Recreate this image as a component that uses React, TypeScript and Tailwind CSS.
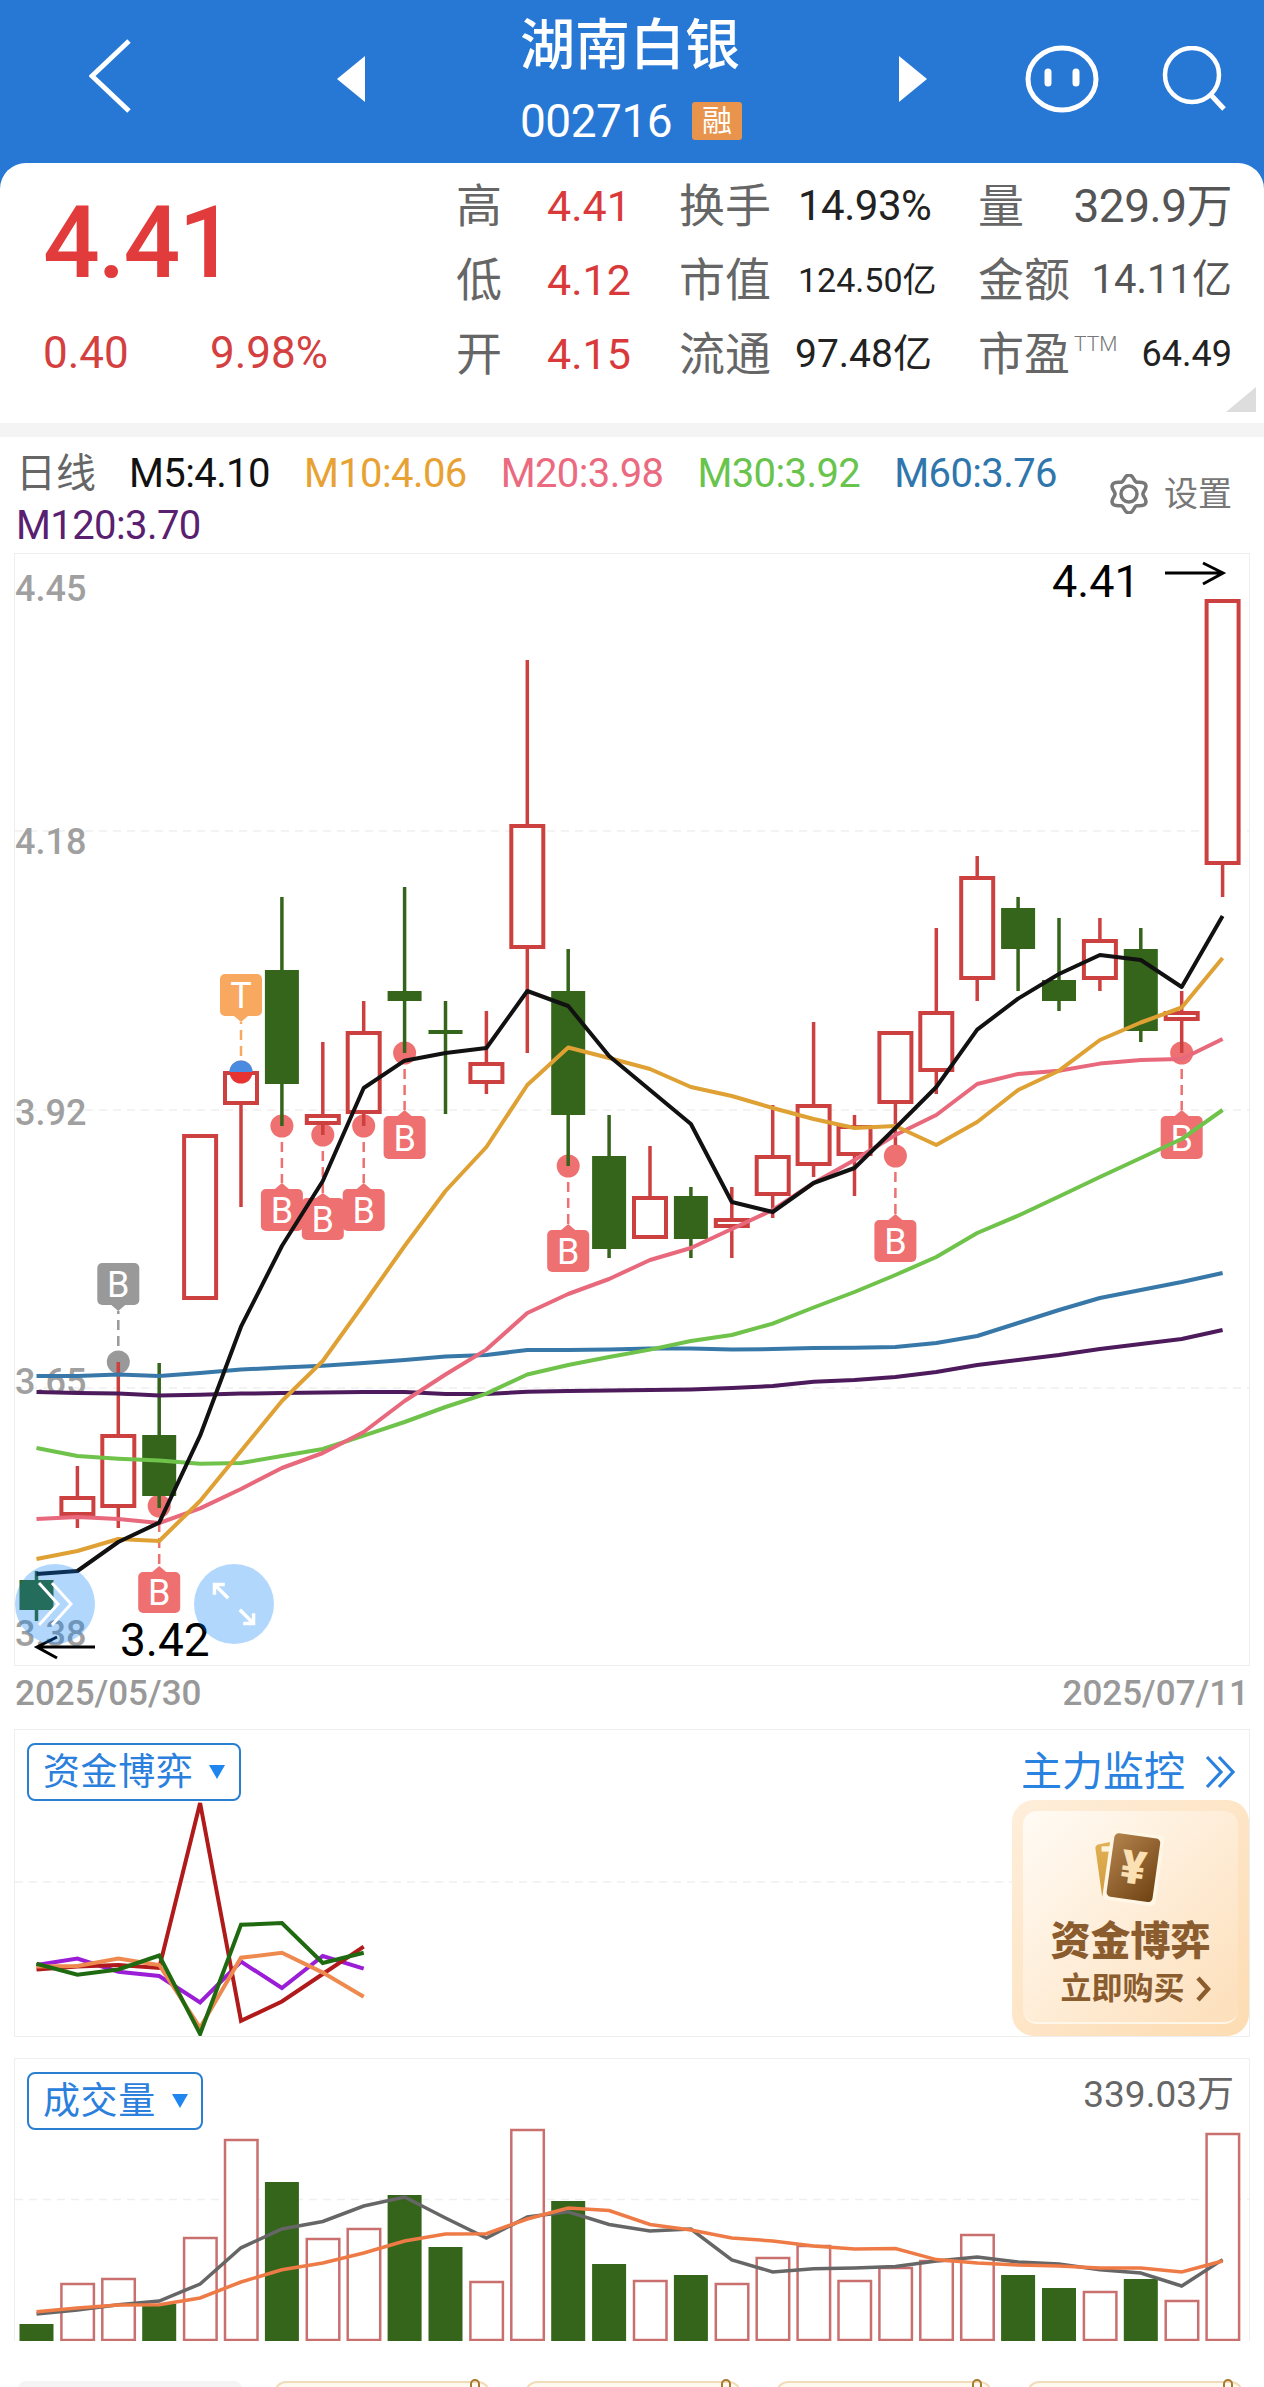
const FONT = "font-['Roboto','Noto_Sans_CJK_SC',sans-serif]";
const RED = "#cc4040";
const GREEN = "#34651a";

const xAt = (i: number) => 36.5 + 40.9 * i;
const pts = (ys: number[]) => ys.map((y, i) => `${xAt(i).toFixed(1)},${y}`).join(" ");

type Candle = [up: boolean, high: number, top: number, bottom: number, low: number];

const candles: Candle[] = [
  [false, 1571, 1580, 1610, 1621],
  [true, 1466, 1496, 1516, 1528],
  [true, 1362, 1434, 1508, 1528],
  [false, 1363, 1435, 1496, 1508],
  [true, 1134, 1134, 1300, 1300],
  [true, 1062, 1071, 1105, 1207],
  [false, 897, 970, 1084, 1126],
  [true, 1042, 1114, 1125, 1135],
  [true, 1001, 1031, 1114, 1126],
  [false, 887, 991, 1001, 1053],
  [false, 1001, 1030, 1034, 1114],
  [true, 1011, 1062, 1084, 1094],
  [true, 660, 824, 949, 1053],
  [false, 949, 991, 1115, 1166],
  [false, 1115, 1156, 1249, 1258],
  [true, 1146, 1196, 1239, 1239],
  [false, 1187, 1196, 1239, 1258],
  [true, 1187, 1218, 1228, 1258],
  [true, 1105, 1155, 1196, 1218],
  [true, 1022, 1104, 1166, 1177],
  [true, 1115, 1125, 1156, 1196],
  [true, 1031, 1031, 1104, 1145],
  [true, 928, 1011, 1072, 1094],
  [true, 856, 876, 980, 1001],
  [false, 897, 908, 949, 991],
  [false, 918, 980, 1001, 1011],
  [true, 918, 939, 980, 991],
  [false, 928, 949, 1031, 1042],
  [true, 991, 1011, 1021, 1053],
  [true, 599, 599, 865, 897],
];

const maLines: { color: string; width: number; ys: number[] }[] = [
  { color: "#3878a8", width: 4, ys: [1376, 1376, 1374.5, 1376, 1373, 1369.5, 1367.6, 1365.7, 1363, 1360, 1356.5, 1355, 1350, 1350, 1349.6, 1348.5, 1348.5, 1349.6, 1349, 1348, 1347.7, 1347, 1343, 1336, 1323, 1310, 1298, 1290, 1282, 1273] },
  { color: "#4d1a5c", width: 4, ys: [1392, 1393, 1393.6, 1395.5, 1394.8, 1393.6, 1393, 1392.5, 1392, 1392, 1394, 1394, 1391.7, 1391, 1390.6, 1390, 1389.4, 1388, 1386, 1381.8, 1380, 1377, 1372, 1365, 1360, 1355, 1349, 1344, 1339, 1330] },
  { color: "#6fc24a", width: 4, ys: [1448, 1456, 1458.7, 1460.6, 1463.7, 1463, 1456, 1449, 1435.7, 1422, 1407, 1393.6, 1374.5, 1365, 1357, 1349.6, 1341, 1335, 1323.6, 1307.5, 1292, 1275, 1257, 1233, 1215.7, 1196.5, 1177, 1158, 1139, 1110] },
  { color: "#e8687c", width: 4, ys: [1519, 1517, 1519, 1523, 1508.4, 1489, 1468, 1453, 1432, 1401, 1374.5, 1349.6, 1313, 1294, 1279, 1260, 1248, 1229, 1210, 1183, 1160, 1135, 1115, 1084, 1074, 1070.7, 1063.6, 1060, 1059, 1039] },
  { color: "#dfa034", width: 4, ys: [1559, 1551, 1539, 1541, 1501, 1451, 1401, 1361, 1304, 1246, 1191, 1147, 1085, 1047.5, 1058, 1069, 1087, 1096, 1108, 1119, 1128, 1126, 1145, 1122, 1090, 1070.7, 1040, 1022.5, 1007.5, 958] },
  { color: "#111111", width: 4, ys: [1574, 1571, 1542, 1522.6, 1435.7, 1326.7, 1246, 1181, 1088, 1060.7, 1053, 1048, 991, 1006, 1056, 1090, 1124, 1202, 1212, 1183, 1168, 1128, 1087, 1029.6, 998.6, 974, 955, 960, 987, 916] },
];

const markers = [
  { i: 2, cy: 1362, top: 1263, bottom: 1305, tip: 1311, color: "#999999" },
  { i: 3, cy: 1506, top: 1572, bottom: 1613, tip: 1566, color: "#ee7070" },
  { i: 7, cy: 1135, top: 1198, bottom: 1240, tip: 1193, color: "#ee7070" },
  { i: 6, cy: 1126, top: 1189, bottom: 1231, tip: 1183, color: "#ee7070" },
  { i: 8, cy: 1126, top: 1189, bottom: 1231, tip: 1183, color: "#ee7070" },
  { i: 9, cy: 1053, top: 1116, bottom: 1159, tip: 1110, color: "#ee7070" },
  { i: 13, cy: 1166, top: 1230, bottom: 1272, tip: 1224, color: "#ee7070" },
  { i: 21, cy: 1156, top: 1220, bottom: 1262, tip: 1214, color: "#ee7070" },
  { i: 28, cy: 1053, top: 1116, bottom: 1159, tip: 1110, color: "#ee7070" },
  { i: 5, cy: 1072, top: 974, bottom: 1016, tip: 1022, color: "#f9a85f", label: "T" },
];

const fundLines: { color: string; ys: number[] }[] = [
  { color: "#9b1dd6", ys: [1965, 1958.5, 1971.7, 1976, 2002.4, 1961.6, 1988, 1956, 1968.6] },
  { color: "#b01a1a", ys: [1969.5, 1966.4, 1965, 1968, 1803, 2020.8, 2001.5, 1974, 1946.7] },
  { color: "#ee8a4f", ys: [1966.4, 1966, 1958.5, 1965, 2027.8, 1957.7, 1952.8, 1972.6, 1996.7] },
  { color: "#1f6a10", ys: [1963.8, 1974.8, 1969.5, 1955.5, 2034, 1924.8, 1923, 1963, 1952.8] },
];

const volumes: [boolean, number][] = [
  [false, 2324], [true, 2284], [true, 2279], [false, 2304], [true, 2238], [true, 2140],
  [false, 2182], [true, 2239], [true, 2229], [false, 2195], [false, 2247], [true, 2282],
  [true, 2130], [false, 2201], [false, 2264], [true, 2281], [false, 2275], [true, 2284],
  [true, 2258], [true, 2246], [true, 2281], [true, 2268], [true, 2261], [true, 2235],
  [false, 2275], [false, 2288], [true, 2292], [false, 2279], [true, 2301], [true, 2134],
];

const volGrey = [2314, 2310, 2304.7, 2301, 2284, 2247.8, 2229, 2221.5, 2206, 2197, 2218, 2238, 2217, 2211.8, 2224.5, 2231, 2229, 2260, 2271.9, 2268.8, 2268, 2266.6, 2261, 2257, 2262, 2264, 2269.7, 2273, 2286, 2259.6];
const volOrange = [2311.7, 2308, 2305, 2304.7, 2298, 2282, 2269.7, 2263, 2253, 2241, 2234, 2233.7, 2219, 2208, 2210.5, 2224.5, 2230, 2238, 2241, 2246, 2249, 2248.6, 2259.6, 2263, 2265, 2266, 2268, 2268, 2272, 2261];

const legend = [
  { text: "M5:4.10", cls: "text-[#111111]" },
  { text: "M10:4.06", cls: "text-[#e8a233]" },
  { text: "M20:3.98", cls: "text-[#ec6a7f]" },
  { text: "M30:3.92", cls: "text-[#68c44c]" },
  { text: "M60:3.76", cls: "text-[#2f76ad]" },
];

const axisLabels = [
  { text: "4.45", y: 601 },
  { text: "4.18", y: 854 },
  { text: "3.92", y: 1125 },
  { text: "3.65", y: 1394 },
  { text: "3.38", y: 1646 },
];

// wavy six lobed gear outline
const gearPath = () => {
  const out: string[] = [];
  for (let a = 0; a < 360; a += 6) {
    const t = (a * Math.PI) / 180;
    const r = 16.5 + 2.6 * Math.cos(6 * t);
    out.push(`${(20 + r * Math.sin(t)).toFixed(2)},${(20 - r * Math.cos(t)).toFixed(2)}`);
  }
  return out.join(" ");
};

const CandleChart = () => (
  <svg viewBox="15 554 1234 1111" className="block h-[1111px] w-[1234px]">
    {[831, 1110, 1388].map((y) => (
      <line key={y} x1={15} x2={1249} y1={y} y2={y} stroke="#f0f0f0" strokeWidth={1.5} strokeDasharray="8 6" />
    ))}
    {axisLabels.map((l) => (
      <text key={l.text} x={15} y={l.y} fontSize={36} fontWeight={500} fill="#a0a0a0" fontFamily="Roboto, sans-serif">
        {l.text}
      </text>
    ))}
    {markers.map((m) => {
      const x = xAt(m.i);
      const isAbove = m.tip > m.bottom;
      return (
        <g key={m.i}>
          <line
            x1={x}
            x2={x}
            y1={m.cy}
            y2={m.tip}
            stroke={m.color}
            strokeWidth={2.5}
            strokeDasharray="10 6"
          />
          <circle cx={x} cy={m.cy} r={11.5} fill={m.color} />
          <rect x={x - 21} y={m.top} width={42} height={m.bottom - m.top} rx={5} fill={m.color} />
          <polygon
            points={
              isAbove
                ? `${x - 7},${m.bottom} ${x + 7},${m.bottom} ${x},${m.tip}`
                : `${x - 7},${m.top} ${x + 7},${m.top} ${x},${m.tip}`
            }
            fill={m.color}
          />
          <text
            x={x}
            y={m.bottom - 8}
            textAnchor="middle"
            fontSize={36}
            fill="#ffffff"
            fontFamily="Roboto, sans-serif"
          >
            {m.label ?? "B"}
          </text>
        </g>
      );
    })}
    {candles.map(([up, high, top, bottom, low], i) => {
      const x = xAt(i);
      const color = up ? RED : GREEN;
      return (
        <g key={i}>
          {high < top && <line x1={x} x2={x} y1={high} y2={top} stroke={color} strokeWidth={3.5} />}
          {low > bottom && <line x1={x} x2={x} y1={bottom} y2={low} stroke={color} strokeWidth={3.5} />}
          {up ? (
            <rect x={x - 16} y={top + 2} width={32} height={bottom - top - 4} fill="#ffffff" stroke={color} strokeWidth={4} />
          ) : (
            <rect x={x - 17} y={top} width={34} height={bottom - top} fill={color} />
          )}
        </g>
      );
    })}
    <path d={`M${xAt(5) - 11.5} 1072 a11.5 11.5 0 0 1 23 0 z`} fill="#4a8ae0" />
    <path d={`M${xAt(5) - 11.5} 1072 a11.5 11.5 0 0 0 23 0 z`} fill="#e83333" />
    {maLines.map((l) => (
      <polyline key={l.color} points={pts(l.ys)} fill="none" stroke={l.color} strokeWidth={l.width} strokeLinejoin="round" />
    ))}
    <text x={1052} y={597} fontSize={45} fill="#000000" fontFamily="Roboto, sans-serif">
      4.41
    </text>
    <path d="M1165 573H1223M1203 563L1223 573L1203 584" fill="none" stroke="#000000" strokeWidth={3} />
    <text x={120} y={1656} fontSize={46} fill="#000000" fontFamily="Roboto, sans-serif">
      3.42
    </text>
    <path d="M95 1647H37M57 1637L37 1647L57 1658" fill="none" stroke="#000000" strokeWidth={3} />
  </svg>
);

const FundChart = () => (
  <svg viewBox="15 1730 1234 306" className="absolute inset-0 block h-[306px] w-[1234px]">
    <line x1={15} x2={1249} y1={1882} y2={1882} stroke="#f0f0f0" strokeWidth={1.5} strokeDasharray="8 6" />
    {fundLines.map((l) => (
      <polyline key={l.color} points={pts(l.ys)} fill="none" stroke={l.color} strokeWidth={4} />
    ))}
  </svg>
);

const VolumeChart = () => (
  <svg viewBox="15 2059 1234 282" className="absolute inset-0 block h-[282px] w-[1234px]">
    <line x1={15} x2={1249} y1={2199.5} y2={2199.5} stroke="#f0f0f0" strokeWidth={1.5} strokeDasharray="8 6" />
    {volumes.map(([up, top], i) => {
      const x = xAt(i);
      return up ? (
        <rect key={i} x={x - 16} y={top} width={32.5} height={2340 - top} fill="#ffffff" stroke="#c9706f" strokeWidth={2.5} />
      ) : (
        <rect key={i} x={x - 17} y={top} width={34} height={2341 - top} fill={GREEN} />
      );
    })}
    <polyline points={pts(volGrey)} fill="none" stroke="#666666" strokeWidth={3.5} />
    <polyline points={pts(volOrange)} fill="none" stroke="#ee7a45" strokeWidth={3.5} />
  </svg>
);

const Dropdown = ({ label, width }: { label: string; width: string }) => (
  <div
    className={`flex h-[58px] items-center rounded-[8px] border-2 border-[#2a7fd0] pl-[14px] ${width}`}
  >
    <span className="text-[37px] leading-none tracking-[0.6px] text-[#2a80dc]">{label}</span>
    <svg viewBox="0 0 16 14" className="ml-[16px] h-[14px] w-[16px]">
      <polygon points="0,0 16,0 8,14" fill="#1e86ee" />
    </svg>
  </div>
);

const CardIcon = () => (
  <svg viewBox="0 0 110 110" className="h-[98px] w-[98px]">
    <defs>
      <linearGradient id="front" x1="0" y1="0" x2="1" y2="1">
        <stop offset="0%" stopColor="#b3834c" />
        <stop offset="100%" stopColor="#6f4213" />
      </linearGradient>
      <linearGradient id="back" x1="0" y1="0" x2="0" y2="1">
        <stop offset="0%" stopColor="#e3b256" />
        <stop offset="100%" stopColor="#cf9a3c" />
      </linearGradient>
    </defs>
    <path d="M18 32L46 26C50 26 50 28 50 30L44 92H28C24 92 22 90 22 86L15 36C15 34 16 33 18 32Z" fill="url(#back)" />
    <rect x="22" y="34" width="10" height="6" fill="#fdf3dc" />
    <g transform="rotate(8 58 56)">
      <rect x="28" y="18" width="60" height="80" rx="5" fill="#fff6e6" />
      <rect x="32" y="22" width="52" height="72" rx="5" fill="url(#front)" />
      <text x="58" y="76" textAnchor="middle" fontSize="52" fontWeight={900} fill="#fbe0b4" fontFamily="Roboto, sans-serif">
        ¥
      </text>
    </g>
  </svg>
);

const PromoCard = () => (
  <div className="h-[236px] w-[237px] rounded-[22px] bg-linear-to-br from-[#feeeda] to-[#fddcb2] p-[11px]">
    <div className="flex h-[213px] flex-col items-center rounded-[14px] border-b-2 border-[#fff6ea] bg-linear-to-br from-[#fffbf5] to-[#fddfba] pt-[5px]">
      <CardIcon />
      <div className="mt-[6px] text-[40px] leading-[44px] font-black text-[#8a5c2e]">资金博弈</div>
      <div className="mt-[7px] flex items-center pl-[10px] text-[31px] leading-[36px] font-bold text-[#8a5c2e]">
        立即购买
        <svg viewBox="0 0 16 26" className="ml-[10px] h-[26px] w-[16px]">
          <path d="M3 2L13 13L3 24" fill="none" stroke="#8a5c2e" strokeWidth={4.5} />
        </svg>
      </div>
    </div>
  </div>
);

const Label = ({ children }: { children: string }) => (
  <span className="text-[46px] leading-none text-[#666666]">{children}</span>
);

const statRows = [
  { a: "高", b: "4.41", c: "换手", d: "14.93%", dCls: "text-[42px] tracking-[-0.5px] text-[#222222]", e: "量", f: "329.9万", fCls: "text-[46px] tracking-[-0.5px] text-[#555555]" },
  { a: "低", b: "4.12", c: "市值", d: "124.50亿", dCls: "text-[34px] text-[#222222]", e: "金额", f: "14.11亿", fCls: "text-[40px] text-[#555555]" },
  { a: "开", b: "4.15", c: "流通", d: "97.48亿", dCls: "text-[39px] -ml-[3px] text-[#222222]", e: "市盈", ttm: true, f: "64.49", fCls: "text-[36px] text-[#222222]" },
];

export default function App() {
  return (
    <div className={`relative h-[2387px] w-[1264px] overflow-hidden bg-white ${FONT}`}>
      {/* top bar */}
      <div className="flex h-[163px] items-center bg-[#2777d5] text-white">
        <svg viewBox="0 0 42 74" className="ml-[89px] mt-[-12px] h-[74px] w-[42px]">
          <path d="M40 2L3 37L40 72" fill="none" stroke="#ffffff" strokeWidth={5} />
        </svg>
        <svg viewBox="0 0 28 46" className="ml-[206px] mt-[-6px] h-[46px] w-[28px]">
          <polygon points="28,0 28,46 0,23" fill="#ffffff" />
        </svg>
        <div className="ml-[155px] flex w-[222px] flex-col self-start pt-[14px]">
          <div className="text-[55px] leading-[62px] font-medium">湖南白银</div>
          <div className="mt-[26px] flex h-[38px] items-center">
            <span className="w-[172px] text-[46px] leading-none tracking-[-0.5px]">002716</span>
            <span className="flex h-[38px] w-[50px] items-center justify-center rounded-[3px] bg-[#e8944d] text-[30px] leading-none">
              融
            </span>
          </div>
        </div>
        <svg viewBox="0 0 28 46" className="ml-[157px] mt-[-6px] h-[46px] w-[28px]">
          <polygon points="0,0 0,46 28,23" fill="#ffffff" />
        </svg>
        <svg viewBox="0 0 74 68" className="ml-[98px] mt-[-5px] h-[68px] w-[74px]">
          <ellipse cx="37" cy="34" rx="34" ry="31" fill="none" stroke="#ffffff" strokeWidth={5} />
          <path d="M23 27V38M51 27V38" stroke="#ffffff" strokeWidth={7} strokeLinecap="round" />
        </svg>
        <svg viewBox="0 0 66 66" className="ml-[63px] mt-[-5px] h-[66px] w-[66px]">
          <circle cx="30" cy="29" r="27" fill="none" stroke="#ffffff" strokeWidth={4.5} />
          <path d="M49 49L62 63" stroke="#ffffff" strokeWidth={5} />
        </svg>
      </div>

      {/* quote card */}
      <div className="bg-[#2777d5]">
        <div className="relative flex h-[260px] rounded-t-[26px] bg-white">
          <div className="w-[456px] pl-[43px] pt-[30px]">
            <div className="text-[100px] leading-[100px] font-medium tracking-[-2px] text-[#e23b3b]">4.41</div>
            <div className="mt-[35px] flex text-[44px] leading-[50px] text-[#d4403f]">
              <span className="w-[167px]">0.40</span>
              <span>9.98%</span>
            </div>
          </div>
          <div className="w-[776px] pt-[6px]">
            {statRows.map((r) => (
              <div key={r.a} className="flex h-[74px] items-center">
                <span className="w-[91px]">
                  <Label>{r.a}</Label>
                </span>
                <span className="w-[132px] text-[43px] leading-none text-[#d9393a]">{r.b}</span>
                <span className="w-[119px]">
                  <Label>{r.c}</Label>
                </span>
                <span className="w-[180px]">
                  <span className={`block leading-none ${r.dCls}`}>{r.d}</span>
                </span>
                <Label>{r.e}</Label>
                {r.ttm && (
                  <span className="mb-[20px] ml-[4px] text-[21px] leading-none font-light text-[#777777]">TTM</span>
                )}
                <span className={`ml-auto leading-none ${r.fCls}`}>{r.f}</span>
              </div>
            ))}
          </div>
          <div className="absolute bottom-[11px] right-[8px] h-[25px] w-[30px] bg-[#dddddd] [clip-path:polygon(100%_0,100%_100%,0_100%)]" />
        </div>
      </div>
      <div className="h-[14px] bg-[#f4f4f4]" />

      {/* moving average legend */}
      <div className="flex h-[116px] items-start pl-[16px] pr-[32px] pt-[11px]">
        <div className="flex w-[1085px] flex-wrap text-[40px] leading-[52px]">
          <span className="w-[113px] text-[40px] text-[#666666]">日线</span>
          {legend.map((l) => (
            <span key={l.text} className={`mr-[34px] tracking-[-0.6px] ${l.cls}`}>
              {l.text}
            </span>
          ))}
          <span className="w-full tracking-[-0.6px] text-[#5a2070]">M120:3.70</span>
        </div>
        <div className="ml-auto mt-[26px] flex items-center text-[#777777]">
          <svg viewBox="0 0 40 40" className="h-[40px] w-[40px]">
            <polygon points={gearPath()} fill="none" stroke="#777777" strokeWidth={3.5} strokeLinejoin="round" />
            <circle cx="20" cy="20" r="8" fill="none" stroke="#777777" strokeWidth={3.5} />
          </svg>
          <span className="ml-[15px] text-[34px] leading-none">设置</span>
        </div>
      </div>

      {/* candle chart */}
      <div className="relative mx-[14px] h-[1113px] w-[1236px] border border-[#eeeeee]">
        <CandleChart />
        <div className="absolute left-0 top-[1010px] flex h-[80px] w-[80px] items-center justify-center rounded-full bg-[#007cf8]/30">
          <svg viewBox="0 0 36 44" className="h-[44px] w-[36px]">
            <path d="M2 1L21 22L2 43M15 1L34 22L15 43" fill="none" stroke="#ffffff" strokeWidth={3} />
          </svg>
        </div>
        <div className="absolute left-[179px] top-[1010px] flex h-[80px] w-[80px] items-center justify-center rounded-full bg-[#007cf8]/30">
          <svg viewBox="0 0 40 40" className="h-[46px] w-[46px]">
            <path d="M3 12V3H12M3 3L15 15M37 28V37H28M37 37L25 25" fill="none" stroke="#ffffff" strokeWidth={3} />
          </svg>
        </div>
      </div>
      <div className="flex h-[63px] justify-between pl-[15px] pr-[15px] pt-[6px] text-[35px] leading-[44px] font-medium text-[#999999]">
        <span>2025/05/30</span>
        <span>2025/07/11</span>
      </div>

      {/* fund panel */}
      <div className="relative mx-[14px] flex h-[308px] w-[1236px] justify-between border border-[#eeeeee]">
        <FundChart />
        <div className="relative ml-[12px] mt-[13px]">
          <Dropdown label="资金博弈" width="w-[214px]" />
        </div>
        <div className="relative flex flex-col items-end">
          <div className="mr-[14px] mt-[14px] flex h-[56px] items-center text-[41px] leading-none text-[#2a82e0]">
            主力监控
            <svg viewBox="0 0 30 34" className="ml-[20px] h-[34px] w-[30px]">
              <path d="M2 2L16 17L2 32M14 2L28 17L14 32" fill="none" stroke="#2a82e0" strokeWidth={3.2} />
            </svg>
          </div>
          <PromoCard />
        </div>
      </div>

      {/* volume panel */}
      <div className="relative mx-[14px] mt-[21px] flex h-[283px] w-[1236px] justify-between border-x border-t border-[#eeeeee]">
        <VolumeChart />
        <div className="relative ml-[12px] mt-[13px]">
          <Dropdown label="成交量" width="w-[176px]" />
        </div>
        <span className="relative mr-[15px] mt-[16px] h-[40px] text-[37px] leading-[40px] text-[#666666]">339.03万</span>
      </div>

      {/* bottom tabs, cut off by the window */}
      <div className="mt-[40px] flex pl-[18px]">
        <div className="h-[20px] w-[224px] rounded-t-[8px] bg-[#f4f4f4]" />
        {[0, 1, 2, 3].map((i) => (
          <div
            key={i}
            className={`relative h-[20px] w-[216px] rounded-t-[12px] border-x-2 border-t-2 border-[#f0dcb8] bg-[#fffaf0] ${
              i === 0 ? "ml-[32px]" : "ml-[35px]"
            }`}
          >
            <div className="absolute right-[8px] top-[-4px] h-[14px] w-[10px] rounded-full border-2 border-[#a87a30]" />
          </div>
        ))}
      </div>
    </div>
  );
}
